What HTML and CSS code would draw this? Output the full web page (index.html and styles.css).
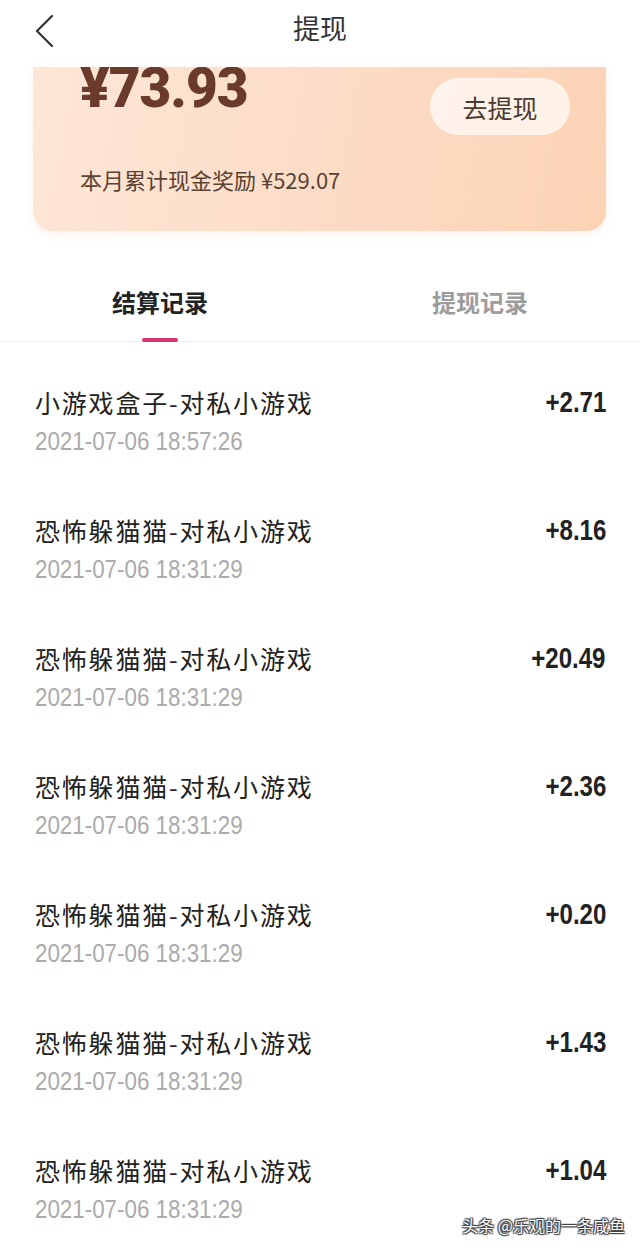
FILE: index.html
```html
<!DOCTYPE html>
<html lang="zh-CN">
<head>
<meta charset="utf-8">
<title>提现</title>
<link rel="stylesheet" href="styles.css">
</head>
<body>
<div class="page">
  <header class="nav">
    <div class="nav-left">
      <svg class="back" width="20" height="34" viewBox="0 0 20 34"><polyline points="17,2 2,17 17,32" fill="none" stroke="#333" stroke-width="2.2" stroke-linecap="round" stroke-linejoin="round"/></svg>
    </div>
    <div class="nav-title">提现</div>
    <div class="nav-right"></div>
  </header>

  <section class="card">
    <div class="card-top">
      <div class="balance">¥73.93</div>
      <div class="btn">去提现</div>
    </div>
    <div class="month">本月累计现金奖励 ¥529.07</div>
  </section>

  <nav class="tabs">
    <div class="tab active"><span class="tab-text">结算记录</span><span class="tab-line"></span></div>
    <div class="tab"><span class="tab-text">提现记录</span><span class="tab-line"></span></div>
  </nav>

  <ul class="list">
    <li class="row"><div class="info"><div class="name">小游戏盒子-对私小游戏</div><div class="date"><span>2021-07-06 18:57:26</span></div></div><div class="amt"><span>+2.71</span></div></li>
    <li class="row"><div class="info"><div class="name">恐怖躲猫猫-对私小游戏</div><div class="date"><span>2021-07-06 18:31:29</span></div></div><div class="amt"><span>+8.16</span></div></li>
    <li class="row"><div class="info"><div class="name">恐怖躲猫猫-对私小游戏</div><div class="date"><span>2021-07-06 18:31:29</span></div></div><div class="amt"><span>+20.49</span></div></li>
    <li class="row"><div class="info"><div class="name">恐怖躲猫猫-对私小游戏</div><div class="date"><span>2021-07-06 18:31:29</span></div></div><div class="amt"><span>+2.36</span></div></li>
    <li class="row"><div class="info"><div class="name">恐怖躲猫猫-对私小游戏</div><div class="date"><span>2021-07-06 18:31:29</span></div></div><div class="amt"><span>+0.20</span></div></li>
    <li class="row"><div class="info"><div class="name">恐怖躲猫猫-对私小游戏</div><div class="date"><span>2021-07-06 18:31:29</span></div></div><div class="amt"><span>+1.43</span></div></li>
    <li class="row"><div class="info"><div class="name">恐怖躲猫猫-对私小游戏</div><div class="date"><span>2021-07-06 18:31:29</span></div></div><div class="amt"><span>+1.04</span></div></li>
  </ul>

  <div class="watermark">头条 @乐观的一条咸鱼</div>
</div>
</body>
</html>
```

FILE: styles.css
```css
* { box-sizing: border-box; }
html, body { margin: 0; padding: 0; background: #fff; }
body {
  font-family: "Noto Sans CJK SC", "Noto Sans", sans-serif;
  color: #222;
}
.page {
  position: relative;
  width: 640px;
  height: 1249px;
  overflow: hidden;
}

/* nav */
.nav {
  height: 67px;
  display: grid;
  grid-template-columns: 1fr auto 1fr;
  align-items: center;
  background: #fff;
}
.nav-left { padding-left: 35px; display: flex; align-items: center; }
.back { display: block; margin-top: -6px; }
.nav-title {
  font-size: 27px;
  line-height: 27px;
  color: #333;
  margin-top: -12px;
}

/* card */
.card {
  margin: 0 34px 0 33px;
  height: 164px;
  border-radius: 0 0 20px 20px;
  overflow: hidden;
  background: linear-gradient(100deg, #fde6d7 0%, #fde0cc 35%, #fcdac3 60%, #fcd6bb 85%, #fbd2b4 100%);
  box-shadow: 0 3px 8px rgba(240, 200, 180, 0.25);
  padding: 0 36px 0 47px;
  display: flex;
  flex-direction: column;
}
.card-top {
  display: flex;
  justify-content: space-between;
  align-items: flex-start;
  margin-top: -7px;
}
.balance {
  font-family: Roboto, "Liberation Sans", sans-serif;
  font-weight: 900;
  font-size: 56px;
  line-height: 56px;
  color: #6a3a2b;
  letter-spacing: -1px;
  transform: scaleX(0.98);
  transform-origin: left center;
}
.btn {
  margin-top: 18px;
  width: 140px;
  height: 57px;
  border-radius: 29px;
  background: rgba(255, 247, 241, 0.85);
  color: #4a3a30;
  font-size: 25px;
  display: flex;
  align-items: center;
  justify-content: center;
}
.month {
  margin-top: 33px;
  font-size: 22px;
  line-height: 22px;
  color: #5b4334;
}

/* tabs */
.tabs {
  display: flex;
  padding-top: 59px;
  border-bottom: 1px solid #efefef;
}
.tab {
  flex: 1;
  display: flex;
  flex-direction: column;
  align-items: center;
}
.tab-text {
  font-size: 24px;
  line-height: 24px;
  font-weight: 700;
  color: #9c9c9c;
}
.tab-line {
  margin-top: 24px;
  margin-bottom: -1px;
  width: 36px;
  height: 4px;
  border-radius: 2px;
  background: transparent;
}
.tab.active .tab-text { color: #222; }
.tab.active .tab-line { background: #d9336f; }

/* list */
.list { list-style: none; margin: 0; padding: 0; }
.row {
  height: 128px;
  padding: 48px 34px 0 35px;
  display: flex;
  justify-content: space-between;
  align-items: flex-start;
}
.info { display: flex; flex-direction: column; }
.name {
  font-size: 25px;
  line-height: 25px;
  color: #222;
  letter-spacing: 1.8px;
}
.date {
  margin-top: 14px;
  font-family: "Liberation Sans", Arial, sans-serif;
  font-size: 26px;
  line-height: 25px;
  color: #ababab;
  white-space: nowrap;
}
.date span {
  display: inline-block;
  transform: scaleX(0.86);
  transform-origin: left center;
}
.amt {
  margin-top: -2px;
  font-family: "Liberation Sans", Arial, sans-serif;
  font-weight: 700;
  font-size: 29px;
  line-height: 29px;
  color: #222;
  white-space: nowrap;
}
.amt span {
  display: inline-block;
  transform: scaleX(0.83);
  transform-origin: right center;
}

/* watermark overlay */
.watermark {
  position: absolute;
  right: 15px;
  bottom: 14px;
  font-size: 16px;
  line-height: 20px;
  color: #fff;
  text-shadow: 0 0 1px #333, 1px 1px 1px #444, -1px -1px 1px #444, 1px -1px 1px #444, -1px 1px 1px #444;
}
```
